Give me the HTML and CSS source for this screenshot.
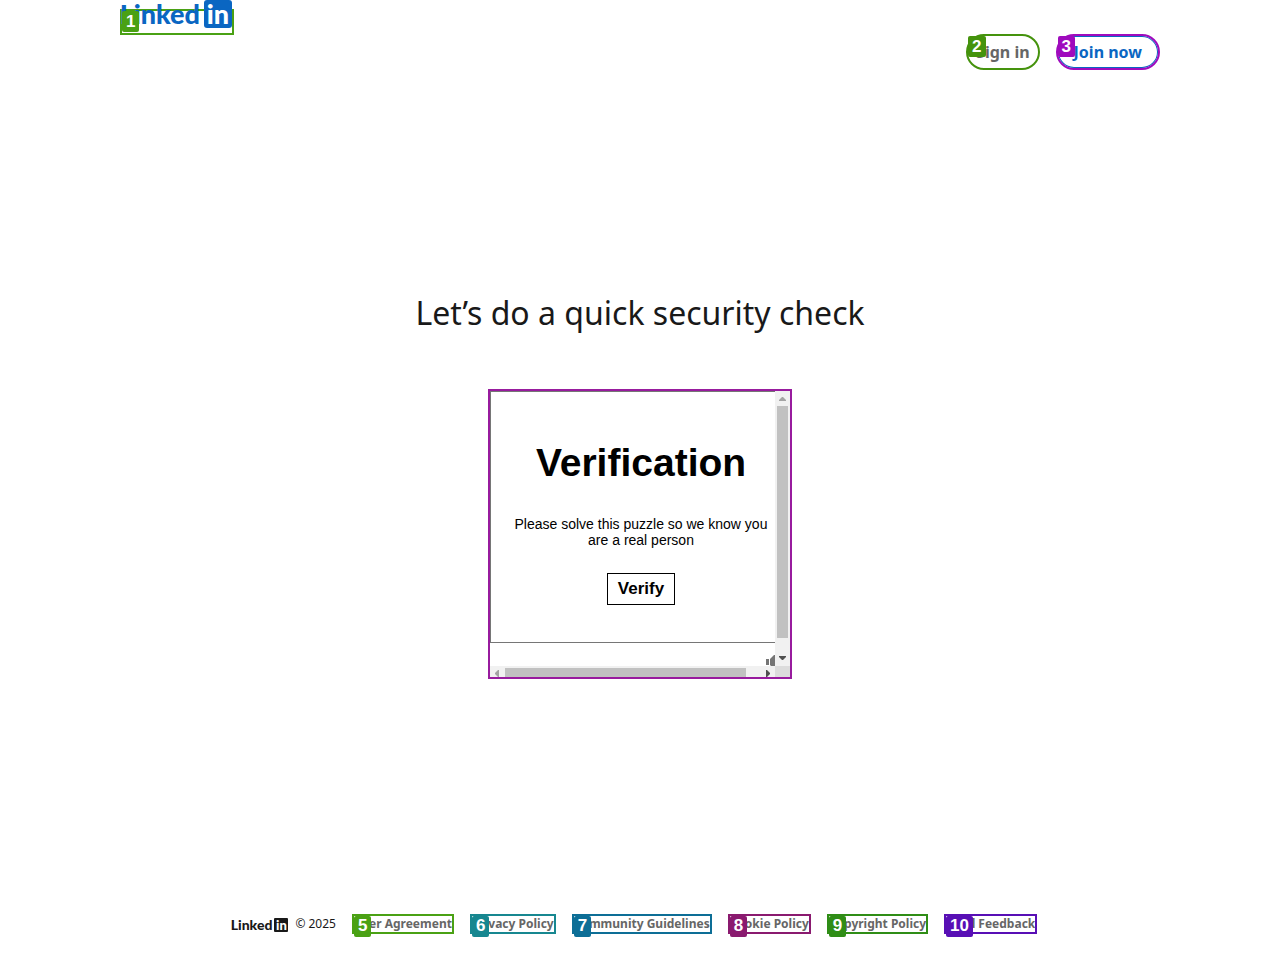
FILE: index.html
```html
<!DOCTYPE html>
<html lang="en">
<head>
<meta charset="utf-8">
<meta name="viewport" content="width=device-width, initial-scale=1">
<title>Security Verification | LinkedIn</title>
<link rel="stylesheet" href="styles.css">
</head>
<body>
<header class="header">
  <a class="brand mark green" href="#" aria-label="LinkedIn">
    <span class="logo"><span class="logo-word">Linked</span><span class="logo-box">in</span></span>
    <span class="badge">1</span>
  </a>
  <nav class="actions">
    <a class="pill mark leaf" href="#">Sign in<span class="badge">2</span></a>
    <a class="pill join mark violet" href="#">Join now<span class="badge">3</span></a>
  </nav>
</header>
<main class="main">
  <h1 class="title">Let’s do a quick security check</h1>
  <section class="frame">
    <div class="view">
      <div class="card">
        <h2 class="card-title">Verification</h2>
        <p class="card-text">Please solve this puzzle so we know you are a real person</p>
        <button class="verify" type="button">Verify</button>
      </div>
      <svg class="audio" width="9" height="11" viewBox="0 0 9 11" aria-hidden="true"><path fill="#757575" d="M0 4h3v6H0zM4 4l4-4h1v11H5l-1-1z"/></svg>
    </div>
    <div class="bar-y">
      <svg width="15" height="15" viewBox="0 0 15 15" aria-hidden="true"><path fill="#a3a3a3" d="M4 10h7v-1L8 6H7L4 9z"/></svg>
      <span class="thumb-y"></span>
      <svg width="15" height="15" viewBox="0 0 15 15" aria-hidden="true"><path fill="#505050" d="M4 5h7v1L8 9H7L4 6z"/></svg>
    </div>
    <div class="bar-x">
      <svg width="15" height="15" viewBox="0 0 15 15" aria-hidden="true"><path fill="#a3a3a3" d="M9 4v7H8L5 8V7l3-3z"/></svg>
      <span class="thumb-x"></span>
      <svg width="15" height="15" viewBox="0 0 15 15" aria-hidden="true"><path fill="#505050" d="M6 4v7h1l3-3V7L7 4z"/></svg>
    </div>
    <div class="corner"></div>
  </section>
</main>
<footer class="footer">
  <div class="copy"><span class="logo small"><span class="logo-word">Linked</span><span class="logo-box">in</span></span><span>© 2025</span></div>
  <a class="link mark green" href="#">User Agreement<span class="badge">5</span></a>
  <a class="link mark teal" href="#">Privacy Policy<span class="badge">6</span></a>
  <a class="link mark blue" href="#">Community Guidelines<span class="badge">7</span></a>
  <a class="link mark plum" href="#">Cookie Policy<span class="badge">8</span></a>
  <a class="link mark forest" href="#">Copyright Policy<span class="badge">9</span></a>
  <a class="link mark indigo" href="#">Send Feedback<span class="badge">10</span></a>
</footer>
</body>
</html>
```
FILE: styles.css
```css
* { box-sizing: border-box; }
body {
  margin: 0;
  min-height: 100vh;
  display: flex;
  flex-direction: column;
  background: #fff;
  color: #191919;
  font-family: "Noto Sans", sans-serif;
}
a { text-decoration: none; }
.green { --mark: #4aa114; }
.leaf { --mark: #45930d; }
.violet { --mark: #9f0bbd; }
.teal { --mark: #178790; }
.blue { --mark: #0d6e96; }
.plum { --mark: #8a1a6f; }
.forest { --mark: #2f8d16; }
.indigo { --mark: #580fb5; }
.mark {
  position: relative;
  border: 2px solid var(--mark);
}
.badge {
  position: absolute;
  top: 0;
  left: 0;
  padding: 0 4px;
  border-radius: 2px;
  background: var(--mark);
  color: #fff;
  font: bold 17px/21px "Liberation Sans", sans-serif;
}
.header {
  display: flex;
  justify-content: space-between;
  align-items: flex-start;
  width: 100%;
  max-width: 1040px;
  margin: 0 auto;
}
.brand {
  display: block;
  width: 114px;
  height: 26px;
  margin-top: 9px;
}
.logo {
  display: flex;
  align-items: flex-end;
  gap: 4px;
  font-family: Lato, sans-serif;
  font-weight: 900;
  color: #0a66c2;
}
.brand .logo {
  position: absolute;
  right: 0;
  bottom: 5px;
}
.logo-word { font-size: 27px; line-height: 28px; }
.logo-box {
  width: 28px;
  height: 28px;
  border-radius: 3px;
  background: #0a66c2;
  color: #fff;
  font-size: 27px;
  line-height: 28px;
  text-align: center;
}
.actions {
  display: flex;
  gap: 16px;
  margin-top: 34px;
}
.pill {
  height: 36px;
  padding: 0 8px;
  border-radius: 18px;
  color: #666;
  font-size: 16px;
  font-weight: 700;
  line-height: 32px;
}
.join {
  padding: 0 16px;
  color: #0a66c2;
  box-shadow: inset 0 0 0 1px #0a66c2;
}
.main {
  flex: 1;
  display: flex;
  flex-direction: column;
  align-items: center;
  padding: 223px 16px 32px;
}
.title {
  margin: 0 0 56px;
  font-size: 32px;
  font-weight: 400;
  line-height: 40px;
}
.frame {
  display: grid;
  grid-template-columns: 1fr 15px;
  grid-template-rows: 275px 11px;
  width: 304px;
  max-width: 100%;
  border: 2px solid #981b9e;
  overflow: hidden;
}
.view {
  position: relative;
  overflow: hidden;
  font-family: "Liberation Sans", sans-serif;
}
.card {
  display: flex;
  flex-direction: column;
  align-items: center;
  width: 302px;
  height: 252px;
  padding: 48px 18px 0;
  border: 1px solid #767676;
  color: #000;
  text-align: center;
}
.card-title {
  margin: 0 0 30px;
  font-size: 39px;
  line-height: 46px;
}
.card-text {
  margin: 0 0 25px;
  font-size: 14px;
  line-height: 16px;
}
.verify {
  height: 32px;
  padding: 0 10px;
  border: 1px solid #000;
  background: #fff;
  color: #000;
  font: bold 17px/30px "Liberation Sans", sans-serif;
}
.audio {
  position: absolute;
  right: 0;
  bottom: 0;
}
.bar-y, .bar-x {
  display: flex;
  background: #f1f1f1;
}
.bar-y { flex-direction: column; }
.bar-x { overflow: hidden; }
.bar-y svg, .bar-x svg { flex: none; }
.thumb-y {
  flex: 1;
  margin: 0 2px 13px;
  background: #c1c1c1;
}
.thumb-x {
  flex: 1;
  height: 11px;
  margin: 2px 14px 0 0;
  background: #c1c1c1;
}
.corner { background: #dcdcdc; }
.footer {
  display: flex;
  flex-wrap: wrap;
  justify-content: center;
  gap: 16px;
  padding: 0 12px 26px 0;
  font-size: 12px;
  line-height: 16px;
}
.footer .badge {
  padding-bottom: 2px;
  line-height: 19px;
}
.copy {
  display: flex;
  align-items: center;
  gap: 7px;
}
.link {
  color: #666;
  font-weight: 700;
}
.small { gap: 2px; color: #191919; padding-top: 2px; }
.small .logo-word { font-size: 14px; line-height: 14px; }
.small .logo-box {
  width: 14px;
  height: 14px;
  border-radius: 1px;
  background: #191919;
  font-size: 13px;
  line-height: 14px;
}
```
